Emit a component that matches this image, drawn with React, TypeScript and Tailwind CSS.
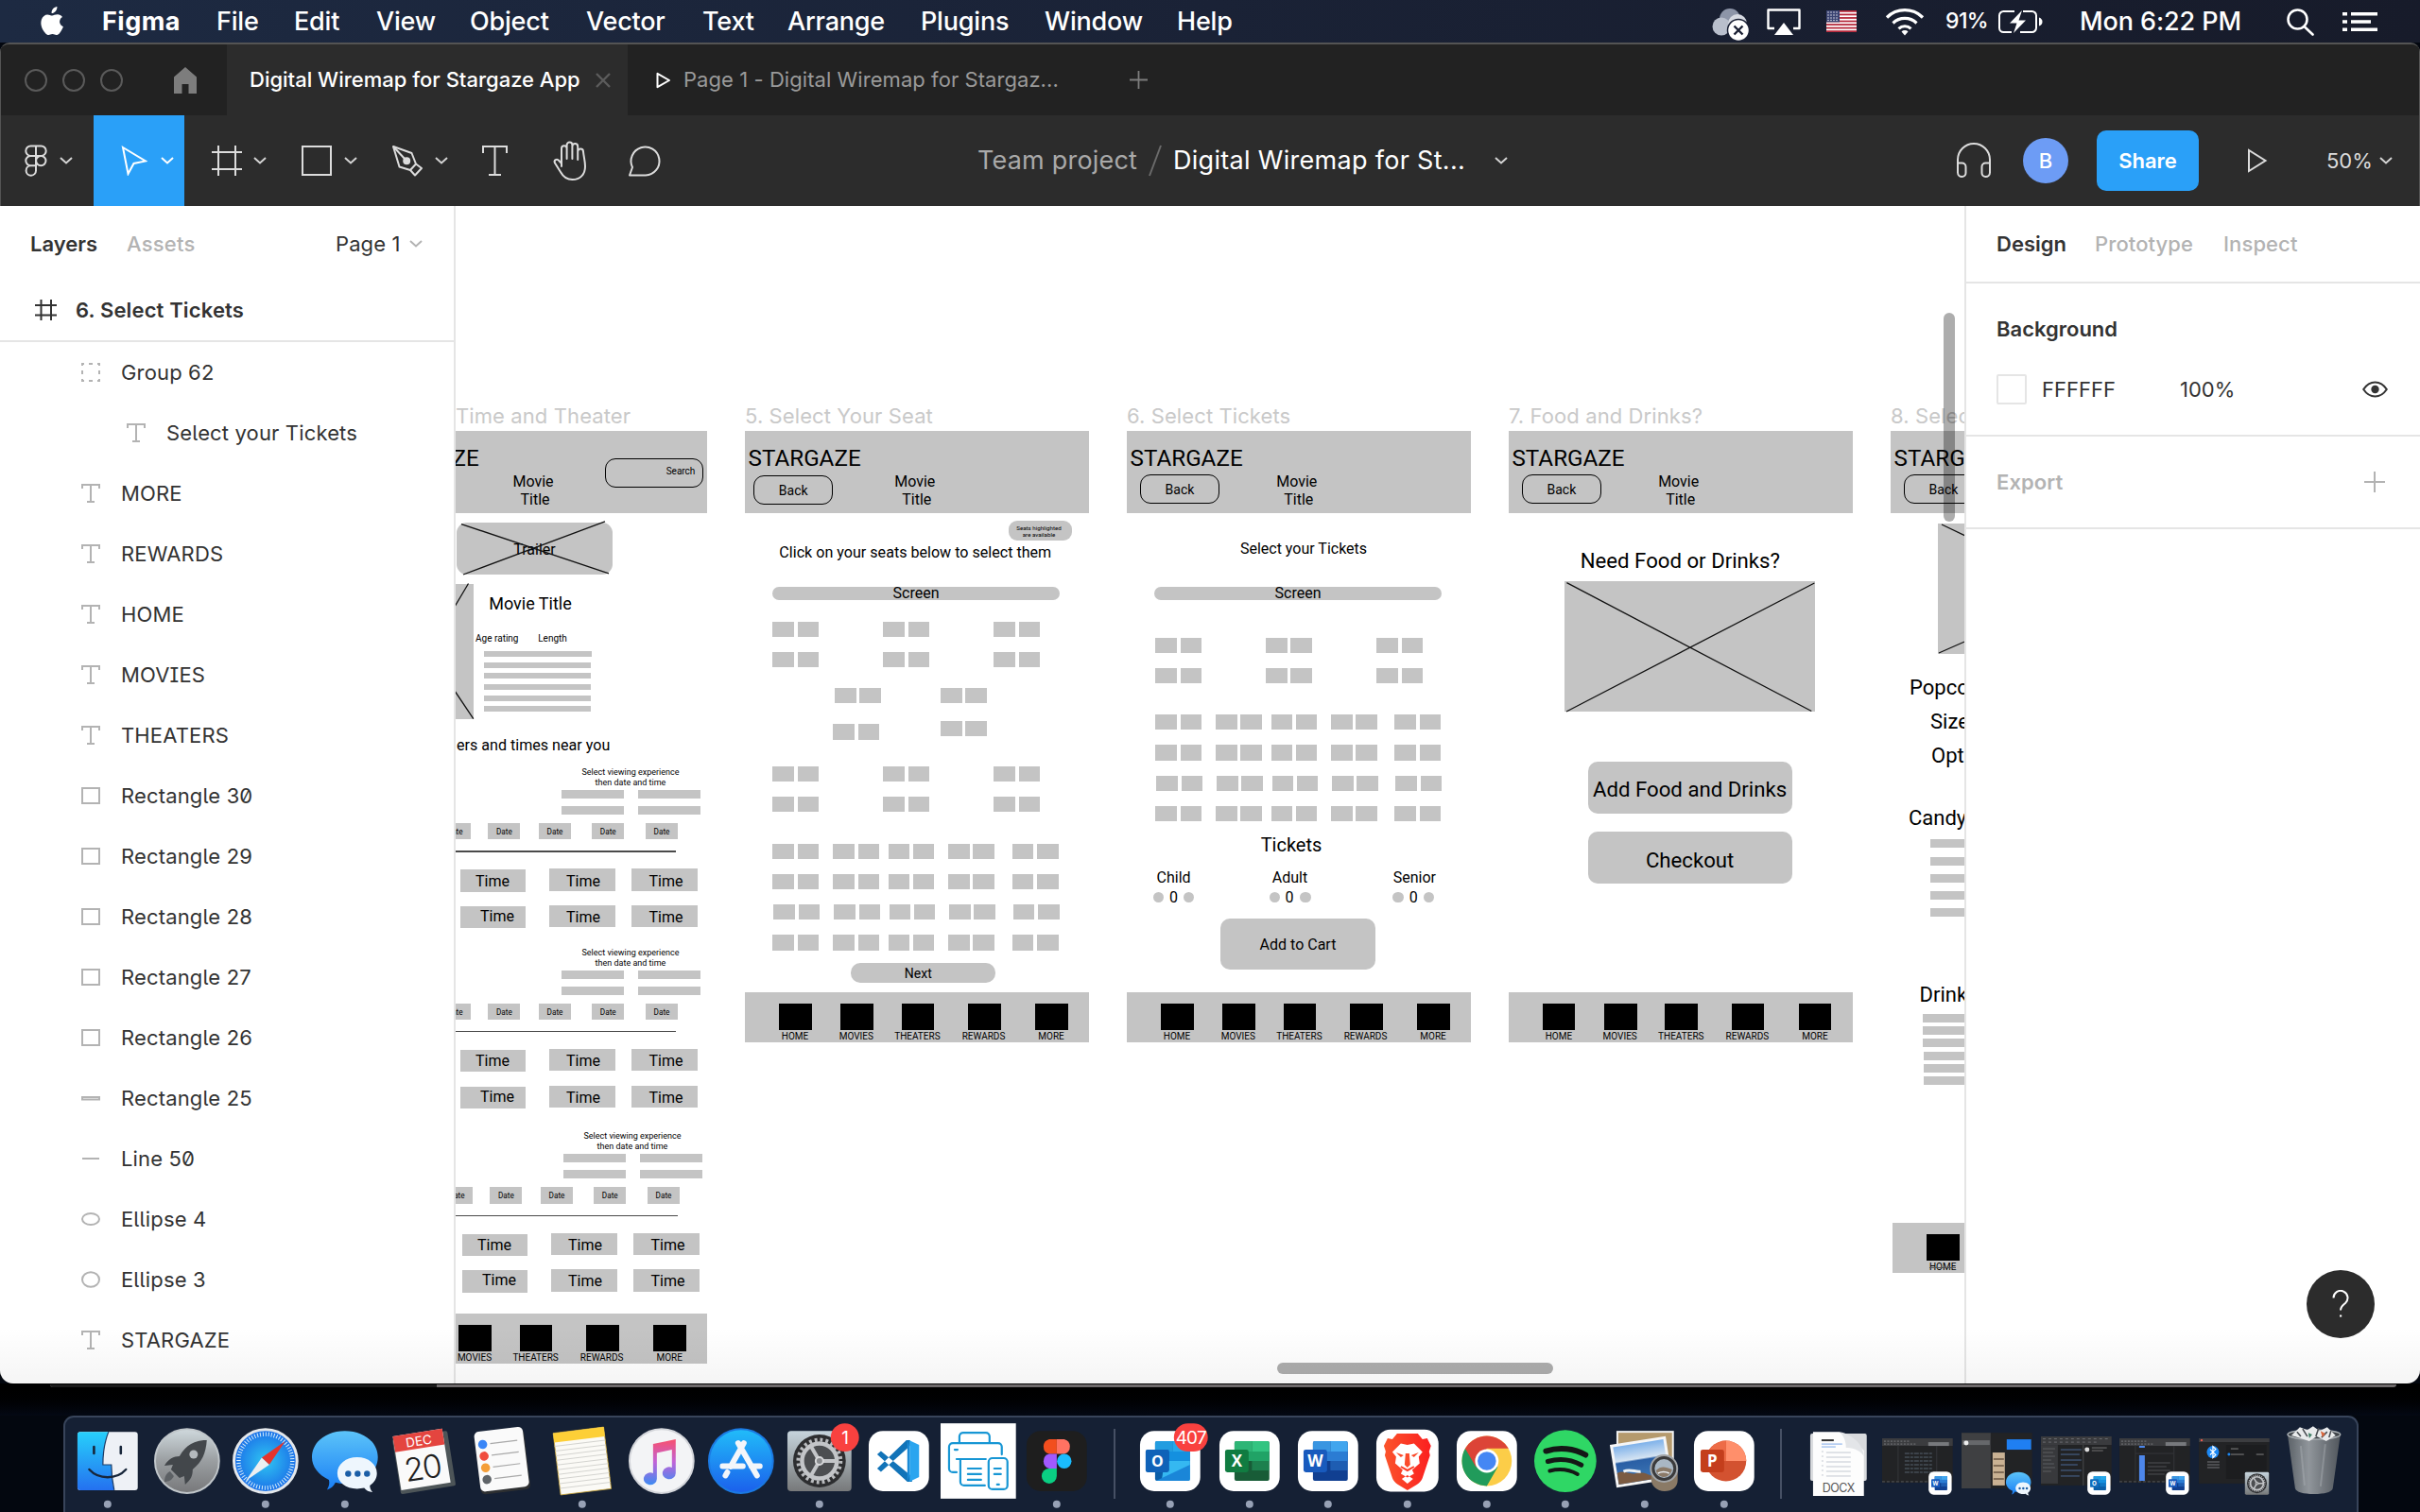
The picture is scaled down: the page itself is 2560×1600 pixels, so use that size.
import React from "react";

/* ------------------------------------------------------------------ */
/* Menu bar                                                            */
/* ------------------------------------------------------------------ */

const MENUS: { label: string; cls: string }[] = [
  { label: "File", cls: "w-[82px]" },
  { label: "Edit", cls: "w-[87px]" },
  { label: "View", cls: "w-[99px]" },
  { label: "Object", cls: "w-[123px]" },
  { label: "Vector", cls: "w-[123px]" },
  { label: "Text", cls: "w-[90px]" },
  { label: "Arrange", cls: "w-[141px]" },
  { label: "Plugins", cls: "w-[131px]" },
  { label: "Window", cls: "w-[140px]" },
  { label: "Help", cls: "w-[70px]" },
];

function MenuBar() {
  return (
    <div className="flex h-[45px] shrink-0 items-center bg-linear-to-r from-[#1d2a42] via-[#1a2236] to-[#171b2a] text-[27px] font-medium text-white">
      <svg className="ml-[41px] h-[34px] w-[28px] shrink-0" viewBox="0 0 28 34" fill="#fff">
        <path d="M19.4 1c.2 2-.6 3.800-1.700 5.100-1.200 1.400-2.700 2.100-4.100 2-.2-2 .6-3.800 1.700-5C16.400 1.900 18 1.100 19.400 1zM20 9.300c1.800 0 3.800 1 5 2.800-4.300 2.600-3.600 8.400.9 10.200-.9 2.500-2.300 4.900-3.800 6.700-1.200 1.400-2.200 2-3.600 2-1.400 0-2.100-.9-4-.9s-2.700.9-4 .9c-1.400 0-2.400-.7-3.600-2.100C2.900 24.700 1.500 19 2.900 14.800 4 11.400 6.600 9.400 9.300 9.400c1.800 0 3.400 1.100 4.900 1.100 1.400 0 3-1.200 5.800-1.200z" />
      </svg>
      <span className="ml-[39px] w-[121px] shrink-0 pt-px font-bold tracking-[0.5px]">Figma</span>
      {MENUS.map((m) => (
        <span key={m.label} className={`${m.cls} shrink-0 whitespace-nowrap pt-px tracking-[-0.2px]`}>
          {m.label}
        </span>
      ))}
      <div className="ml-auto flex items-center">
        <svg className="h-[40px] w-[44px]" viewBox="0 0 44 40">
          <circle cx="21" cy="17" r="11" fill="#8d95a8" />
          <circle cx="12" cy="25" r="9.500" fill="#b9bfcc" />
          <circle cx="29" cy="22" r="10" fill="#d7dae2" />
          <circle cx="30" cy="29" r="11.500" fill="#fff" stroke="#1a2034" strokeWidth="1.500" />
          <path d="M25.500 24.500l9 9M34.500 24.500l-9 9" stroke="#1a2034" strokeWidth="2.400" />
        </svg>
        <svg className="ml-[15px] h-[32px] w-[38px]" viewBox="0 0 38 32">
          <path d="M9 23H2.500V3.500h33V23H29" fill="none" stroke="#fff" strokeWidth="2.400" strokeLinejoin="round" />
          <path d="M19 17l10 13H9z" fill="#fff" />
        </svg>
        <svg className="ml-[26px] h-[23px] w-[32px]" viewBox="0 0 32 23">
          <rect width="32" height="23" fill="#fff" />
          {[0, 2, 4, 6, 8, 10, 12].map((i) => (
            <rect key={i} y={i * 1.77} width="32" height="1.770" fill="#b5283a" />
          ))}
          <rect width="14" height="12.400" fill="#3a4372" />
          {[2, 5, 8, 11].map((x) =>
            [2, 5, 8, 10.500].map((y) => <circle key={`${x}-${y}`} cx={x} cy={y} r=".7" fill="#fff" />),
          )}
        </svg>
        <svg className="ml-[30px] h-[30px] w-[42px]" viewBox="0 0 42 30" fill="none" stroke="#fff" strokeWidth="3.200">
          <path d="M2 10.500a27 27 0 0 1 38 0" />
          <path d="M8.500 16.500a18 18 0 0 1 25 0" />
          <path d="M14.500 22.300a9.500 9.500 0 0 1 13 0" />
          <path d="M21 29.500l-3.500-4a5 5 0 0 1 7 0z" fill="#fff" stroke="none" />
        </svg>
        <span className="ml-[22px] w-[55px] whitespace-nowrap text-[23px] tracking-[-0.6px]">91%</span>
        <svg className="h-[26px] w-[48px]" viewBox="0 0 48 26">
          <path
            d="M18 2H6.500A4.500 4.500 0 0 0 2 6.500v13A4.500 4.500 0 0 0 6.500 24H15M27 2h9.500A4.500 4.500 0 0 1 41 6.500v13a4.500 4.500 0 0 1-4.500 4.500H24"
            fill="none"
            stroke="#fff"
            strokeWidth="2"
          />
          <path d="M44 8.500c2.500 1 3.500 2.500 3.500 4.500S46.500 16.500 44 17.500z" fill="#fff" />
          <path d="M26 1L13 14.500h7.500L17 25l13-13.500h-7.500z" fill="#fff" />
        </svg>
        <span className="ml-[39px] w-[177px] whitespace-nowrap pt-px tracking-[-0.1px]">Mon 6:22 PM</span>
        <svg className="ml-[41px] h-[30px] w-[31px]" viewBox="0 0 31 30" fill="none" stroke="#fff" strokeWidth="2.600">
          <circle cx="12.500" cy="12.500" r="10" />
          <path d="M19.500 20l9 8.500" strokeLinecap="round" />
        </svg>
        <svg className="ml-[29px] mr-[45px] h-[22px] w-[37px]" viewBox="0 0 37 22" fill="#fff">
          <path d="M0 1h5v3.500H0zM9 1h28v3.500H9zM0 9.200h5v3.500H0zM9 9.200h21v3.500H9zM0 17.400h5v3.500H0zM9 17.400h28v3.500H9z" />
        </svg>
      </div>
    </div>
  );
}

/* ------------------------------------------------------------------ */
/* Window chrome                                                       */
/* ------------------------------------------------------------------ */

function TabBar() {
  return (
    <div className="flex h-[75px] shrink-0 items-stretch bg-[#222222] text-[22px]">
      <div className="flex w-[239px] shrink-0 items-center pl-[25px]">
        {[0, 1, 2].map((i) => (
          <span key={i} className="mr-[16px] size-[24px] rounded-full border-2 border-[#5a5a5a]" />
        ))}
        <svg className="ml-[38px] h-[28px] w-[24px]" viewBox="0 0 24 28" fill="#7d7d7d">
          <path d="M12 0l12 10.500V28h-8.500V18h-7v10H0V10.500z" />
        </svg>
      </div>
      <div className="flex w-[424px] shrink-0 items-center bg-[#2c2c2c] pl-[24px]">
        <span className="w-[366px] whitespace-nowrap font-medium text-white">
          Digital Wiremap for Stargaze App
        </span>
        <svg className="size-[16px]" viewBox="0 0 16 16" stroke="#5c5c5c" strokeWidth="2.400">
          <path d="M1 1l14 14M15 1L1 15" />
        </svg>
      </div>
      <div className="flex items-center pl-[30px]">
        <svg className="h-[18px] w-[16px]" viewBox="0 0 16 18" fill="none" stroke="#fff" strokeWidth="2">
          <path d="M1.500 1.800v14.400L14 9z" strokeLinejoin="round" />
        </svg>
        <span className="ml-[13px] w-[472px] whitespace-nowrap tracking-[0.06px] text-[#9a9a9a]">
          Page 1 - Digital Wiremap for Stargaz...
        </span>
        <svg className="size-[19px]" viewBox="0 0 19 19" stroke="#7d7d7d" strokeWidth="1.800">
          <path d="M9.500 0v19M0 9.500h19" />
        </svg>
      </div>
    </div>
  );
}

function Chevron({ className, color = "#d4d4d4" }: { className?: string; color?: string }) {
  return (
    <svg className={`h-[8px] w-[14px] shrink-0 ${className ?? ""}`} viewBox="0 0 14 8" fill="none" stroke={color} strokeWidth="2">
      <path d="M1 1l6 5.500L13 1" />
    </svg>
  );
}

function Toolbar() {
  const s = { fill: "none", stroke: "#dcdcdc", strokeWidth: 2 };
  return (
    <div className="flex h-[96px] shrink-0 items-center bg-[#2c2c2c] text-[26px] text-white">
      <svg className="ml-[25px] h-[34px] w-[24px]" viewBox="0 0 24 34" {...s}>
        <path d="M12 1.500H6.500a5.200 5.200 0 0 0 0 10.400H12zM12 1.500h5.500a5.200 5.200 0 0 1 0 10.400H12M12 11.900H6.500a5.200 5.200 0 0 0 0 10.400H12zM12 22.300H6.500a5.200 5.200 0 1 0 5.500 5.200z" />
        <circle cx="17.300" cy="17.100" r="5.200" />
      </svg>
      <Chevron className="ml-[13px]" />
      <div className="ml-[22px] flex h-[96px] w-[96px] items-center bg-[#2aa0f8]">
        <svg className="ml-[29px] h-[32px] w-[28px]" viewBox="0 0 28 32" fill="none" stroke="#fff" strokeWidth="2">
          <path d="M2 2l24 14.500-12.500 2.500L7.500 30z" strokeLinejoin="miter" />
        </svg>
        <Chevron className="ml-[14px]" color="#fff" />
      </div>
      <svg className="ml-[29px] h-[32px] w-[32px]" viewBox="0 0 32 32" {...s}>
        <path d="M7 0v32M25 0v32M0 7h32M0 25h32" />
      </svg>
      <Chevron className="ml-[12px]" />
      <svg className="ml-[37px] h-[32px] w-[32px]" viewBox="0 0 32 32" {...s}>
        <rect x="1" y="1" width="30" height="30" />
      </svg>
      <Chevron className="ml-[13px]" />
      <svg className="ml-[36px] h-[34px] w-[34px]" viewBox="0 0 34 34" {...s}>
        <path d="M2 2l6.500 21.500 11.500 3.500 6-6.500-4.500-11.500z" strokeLinejoin="round" />
        <path d="M20 27l5 5.500L32 25l-6-4.500M2 2l13 14" strokeLinejoin="round" />
        <circle cx="16.200" cy="17.200" r="3" fill="#dcdcdc" />
      </svg>
      <Chevron className="ml-[12px]" />
      <svg className="ml-[36px] h-[32px] w-[27px]" viewBox="0 0 27 32" {...s}>
        <path d="M1 8V1h25v7M13.500 1v30M7 31h13" />
      </svg>
      <svg className="ml-[47px] h-[42px] w-[38px]" viewBox="0 0 38 42" {...s} strokeLinejoin="round" strokeLinecap="round">
        <path d="M10 27V8a2.800 2.800 0 0 1 5.600 0v11M15.600 19V4.500a2.900 2.900 0 0 1 5.800 0V19M21.400 19V6a2.900 2.900 0 0 1 5.800 0v14M27.200 20V11.500a2.900 2.900 0 0 1 5.800 0c.6 6 2 10 2 15.500 0 9-5.500 14-13.500 14-6 0-9.500-2.500-12.500-8l-6-9.500c-1.500-3 2-5 4.300-2.500L10 24" />
      </svg>
      <svg className="ml-[41px] h-[34px] w-[38px]" viewBox="0 0 38 34" {...s}>
        <path d="M3 32.500L6 24A15 15 0 1 1 20 32.500H3z" strokeLinejoin="round" />
      </svg>
      <span className="ml-[333px] w-[181px] whitespace-nowrap text-[27px] tracking-[0.2px] text-[#a9a9a9]">Team project</span>
      <svg className="h-[34px] w-[14px]" viewBox="0 0 14 34" stroke="#6b6b6b" strokeWidth="2">
        <path d="M13 1L1 33" />
      </svg>
      <span className="ml-[12px] w-[340px] whitespace-nowrap text-[27px] tracking-[0.3px]">Digital Wiremap for St...</span>
      <Chevron />
      <svg className="ml-auto h-[38px] w-[38px]" viewBox="0 0 38 38" {...s}>
        <path d="M2 25V18a17 17 0 0 1 34 0v7" />
        <path d="M2 21.500h4.500a4 4 0 0 1 4 4V32a4 4 0 0 1-4 4A4.500 4.500 0 0 1 2 31.500zM36 21.500h-4.500a4 4 0 0 0-4 4V32a4 4 0 0 0 4 4 4.500 4.500 0 0 0 4.500-4.500z" />
      </svg>
      <span className="ml-[33px] flex size-[48px] items-center justify-center rounded-full bg-[#6d9cf5] text-[22px] font-medium">
        B
      </span>
      <span className="ml-[30px] flex h-[64px] w-[108px] items-center justify-center rounded-[10px] bg-[#2aa0f8] text-[22px] font-semibold">
        Share
      </span>
      <svg className="ml-[51px] h-[26px] w-[22px]" viewBox="0 0 22 26" {...s}>
        <path d="M2 2v22l17.500-11z" />
      </svg>
      <span className="ml-[62px] w-[56px] text-[22px] text-[#dcdcdc]">50%</span>
      <Chevron className="mr-[28px]" />
    </div>
  );
}

/* ------------------------------------------------------------------ */
/* Layers panel                                                        */
/* ------------------------------------------------------------------ */

type Kind = "group" | "text" | "rect" | "bar" | "line" | "flat" | "oval";
const LAYERS: { name: string; kind: Kind; nested?: boolean }[] = [
  { name: "Group 62", kind: "group" },
  { name: "Select your Tickets", kind: "text", nested: true },
  { name: "MORE", kind: "text" },
  { name: "REWARDS", kind: "text" },
  { name: "HOME", kind: "text" },
  { name: "MOVIES", kind: "text" },
  { name: "THEATERS", kind: "text" },
  { name: "Rectangle 30", kind: "rect" },
  { name: "Rectangle 29", kind: "rect" },
  { name: "Rectangle 28", kind: "rect" },
  { name: "Rectangle 27", kind: "rect" },
  { name: "Rectangle 26", kind: "rect" },
  { name: "Rectangle 25", kind: "bar" },
  { name: "Line 50", kind: "line" },
  { name: "Ellipse 4", kind: "flat" },
  { name: "Ellipse 3", kind: "oval" },
  { name: "STARGAZE", kind: "text" },
];

function LayerIcon({ kind }: { kind: Kind }) {
  return (
    <svg className="h-[20px] w-[20px] shrink-0" viewBox="0 0 20 20" fill="none" stroke="#b3b3b3" strokeWidth="2">
      {kind === "group" && <path d="M0 1h3M8 1h4M17 1h3M0 19h3M8 19h4M17 19h3M1 0v3M1 8v4M1 17v3M19 0v3M19 8v4M19 17v3" />}
      {kind === "text" && <path d="M1 5V1h18v4M10 1v18M6 19h8" />}
      {kind === "rect" && <rect x="1" y="2" width="18" height="16" />}
      {kind === "bar" && <rect x="1" y="9" width="18" height="2.500" />}
      {kind === "line" && <path d="M1 10h18" />}
      {kind === "flat" && <ellipse cx="10" cy="10" rx="9" ry="6" />}
      {kind === "oval" && <ellipse cx="10" cy="10" rx="9" ry="7.800" />}
    </svg>
  );
}

function LayersPanel() {
  return (
    <div className="flex w-[482px] shrink-0 flex-col border-r-2 border-[#e5e5e5] bg-white text-[22px] text-[#333]">
      <div className="flex h-[80px] items-center pl-[32px]">
        <span className="w-[102px] font-semibold">Layers</span>
        <span className="w-[221px] font-medium tracking-[0.2px] text-[#b3b3b3]">Assets</span>
        <span className="w-[78px] tracking-[0.1px]">Page 1</span>
        <Chevron color="#b3b3b3" />
      </div>
      <div className="flex h-[64px] items-center border-b-2 border-[#e5e5e5] pb-[2px] pl-[37px]">
        <svg className="h-[22px] w-[23px]" viewBox="0 0 23 22" stroke="#333" strokeWidth="2">
          <path d="M6.500 0v22M17 0v22M0 6h23M0 16.500h23" />
        </svg>
        <span className="ml-[20px] whitespace-nowrap font-semibold tracking-[0.15px]">6. Select Tickets</span>
      </div>
      {LAYERS.map((l) => (
        <div
          key={l.name}
          className={`flex h-[64px] shrink-0 items-center ${l.nested ? "pl-[134px]" : "pl-[86px]"}`}
        >
          <LayerIcon kind={l.kind} />
          <span className="ml-[22px] whitespace-nowrap tracking-[0.15px] [font-feature-settings:'ss02'_1,'zero'_1]">{l.name}</span>
        </div>
      ))}
    </div>
  );
}

/* ------------------------------------------------------------------ */
/* Canvas                                                              */
/* ------------------------------------------------------------------ */

function R({ x, y, w, h, r = 0, c = "#c4c4c4" }: { x: number; y: number; w: number; h: number; r?: number; c?: string }) {
  return <div className="absolute" style={{ left: x, top: y, width: w, height: h, borderRadius: r, background: c }} />;
}

function Outline({ x, y, w, h }: { x: number; y: number; w: number; h: number }) {
  return <div className="absolute rounded-[11px] border-[1.500px] border-black" style={{ left: x, top: y, width: w, height: h }} />;
}

/* Text centred on (x, y), or starting at x when `left` is set. */
function T({ x, y, s, t, left }: { x: number; y: number; s: number; t: string; left?: boolean }) {
  return (
    <div
      className={`absolute -translate-y-1/2 whitespace-nowrap font-['Roboto',sans-serif] leading-none text-black ${left ? "" : "-translate-x-1/2"}`}
      style={{ left: x, top: y, fontSize: s }}
    >
      {t}
    </div>
  );
}

function Label({ x, t }: { x: number; t: string }) {
  return (
    <div className="absolute top-[426px] whitespace-nowrap text-[22px] leading-[28px] tracking-[0.1px] text-[#c9c9c9]" style={{ left: x }}>
      {t}
    </div>
  );
}

function Lines({ d }: { d: string }) {
  return (
    <svg className="absolute left-0 top-0 h-[1600px] w-[2560px]" viewBox="0 0 2560 1600" fill="none" stroke="#111" strokeWidth="1.300">
      <path d={d} />
    </svg>
  );
}

function Header({ x, back }: { x: number; back?: number }) {
  return (
    <>
      <R x={x} y={456.4} w={364} h={86.6} />
      <T x={x + 3.800} y={485} s={24.2} t="STARGAZE" left />
      {back !== undefined && (
        <>
          <Outline x={x + back} y={back < 12 ? 502.500 : 501.500} w={84} h={31} />
          <T x={x + back + 42} y={back < 12 ? 518.500 : 517.500} s={14} t="Back" />
        </>
      )}
      <T x={x + 180} y={510} s={16} t="Movie" />
      <T x={x + 182} y={529} s={16} t="Title" />
    </>
  );
}

const NAV = [
  { t: "HOME", x: 36.2, c: 53.2 },
  { t: "MOVIES", x: 101.4, c: 118 },
  { t: "THEATERS", x: 165.7, c: 182.6 },
  { t: "REWARDS", x: 236.2, c: 252.7 },
  { t: "MORE", x: 307.2, c: 324.2 },
];

function Footer({ x, y }: { x: number; y: number }) {
  return (
    <>
      <R x={x} y={y} w={364} h={52.500} />
      {NAV.map((n) => (
        <React.Fragment key={n.t}>
          <R x={x + n.x} y={y + 12} w={34.500} h={28.200} c="#000" />
          <T x={x + n.c} y={y + 47} s={10} t={n.t} />
        </React.Fragment>
      ))}
    </>
  );
}

function Seats({ at }: { at: [number, number][] }) {
  return (
    <>
      {at.map(([x, y]) => (
        <React.Fragment key={`${x}-${y}`}>
          <R x={x} y={y} w={22.500} h={16.300} />
          <R x={x + 26.300} y={y} w={22.500} h={16.300} />
        </React.Fragment>
      ))}
    </>
  );
}

const grid = (xs: number[], ys: number[], dx = 0): [number, number][] =>
  ys.flatMap((y) => xs.map((x): [number, number] => [x + dx, y]));

function Showtimes({ dx, dy }: { dx: number; dy: number }) {
  return (
    <>
      <T x={667 + dx} y={817 + dy} s={9} t="Select viewing experience" />
      <T x={667 + dx} y={828 + dy} s={9} t="then date and time" />
      {[594, 675].map((x) => [836, 853].map((y) => <R key={`${x}${y}`} x={x + dx} y={y + dy} w={66} h={9} />))}
      {[464.2, 516.4, 570, 626.3, 683].map((x) => (
        <React.Fragment key={x}>
          <R x={x + dx} y={871 + dy} w={33.600} h={17.300} />
          <T x={x + 17 + dx} y={880 + dy} s={8.2} t="Date" />
        </React.Fragment>
      ))}
      <R x={440} y={900.2 + dy} w={274.6 + dx} h={1.600} c="#4a4a4a" />
      <R x={486.5 + dx} y={920.4 + dy} w={69.700} h={23.400} />
      <R x={486.5 + dx} y={959 + dy} w={69.700} h={23.400} />
      <T x={521 + dx} y={932.500 + dy} s={16} t="Time" />
      <T x={526 + dx} y={970 + dy} s={16} t="Time" />
      {[
        [581.2, 617],
        [668.2, 704.5],
      ].map(([x, c]) => (
        <React.Fragment key={x}>
          <R x={x + dx} y={919.300 + dy} w={69.700} h={23.600} />
          <R x={x + dx} y={957.900 + dy} w={69.700} h={23.600} />
          <T x={c + dx} y={932.500 + dy} s={16} t="Time" />
          <T x={c + dx} y={971 + dy} s={16} t="Time" />
        </React.Fragment>
      ))}
    </>
  );
}

function TheaterFrame() {
  return (
    <>
      <Label x={482} t="Time and Theater" />
      <Header x={384} />
      <Outline x={639.5} y={484.5} w={104.5} h={31.5} />
      <T x={720} y={499} s={10} t="Search" />
      <R x={483.4} y={553.2} w={164.6} h={54.400} r={11} />
      <T x={565.5} y={581.500} s={16} t="Trailer" />
      <R x={440} y={618} w={60.8} h={142.800} />
      <Lines d="M488 554.600L644 606.800M490 608L640 551.800M478 647L495.500 617.500M478 726.500L500.800 760.700" />
      <T x={561} y={638.500} s={18} t="Movie Title" />
      <T x={525.8} y={675.500} s={10} t="Age rating" />
      <T x={584.5} y={675.500} s={10} t="Length" />
      <R x={512.4} y={689} w={113.400} h={6} />
      {[700.7, 712.1, 723.9, 735.7, 747.1].map((y) => (
        <R key={y} x={511.5} y={y} w={113.400} h={6} />
      ))}
      <T x={483} y={788.500} s={16.1} t="ers and times near you" left />
      <Showtimes dx={0} dy={0} />
      <Showtimes dx={0} dy={190.6} />
      <Showtimes dx={2} dy={385.4} />
      <Footer x={384} y={1390} />
    </>
  );
}

function SeatFrame() {
  return (
    <>
      <Label x={788} t="5. Select Your Seat" />
      <Header x={787.8} back={9.4} />
      <R x={1067} y={551} w={66.5} h={20.800} r={9} />
      <T x={1099} y={558.500} s={6.200} t="Seats highlighted" />
      <T x={1099} y={565.500} s={6.200} t="are available" />
      <T x={968.3} y={585} s={16.1} t="Click on your seats below to select them" />
      <R x={817.3} y={621} w={304} h={14} r={7} />
      <T x={969} y={628} s={16} t="Screen" />
      <Seats at={grid([817.3, 934.3, 1051.3], [657.5, 689.6, 810.7, 842.9])} />
      <Seats at={[[883, 727.9], [995, 727.9], [881.2, 766.4], [995, 763.2]]} />
      <Seats at={grid([817.3, 881.2, 939.6, 1003, 1070.9], [892.5, 924.6, 989.3])} />
      <Seats at={grid([817.3, 881.2, 939.6, 1003, 1070.9], [957.1], 1)} />
      <R x={900} y={1019.300} w={153} h={20.400} r={10} />
      <T x={971.3} y={1030} s={14} t="Next" />
      <Footer x={787.8} y={1050} />
    </>
  );
}

function TicketFrame() {
  return (
    <>
      <Label x={1192} t="6. Select Tickets" />
      <Header x={1191.8} back={14.2} />
      <T x={1379} y={580.500} s={16} t="Select your Tickets" />
      <R x={1221.3} y={621} w={304} h={14} r={7} />
      <T x={1373} y={628} s={16} t="Screen" />
      <Seats at={grid([1222.2, 1339, 1456.4], [674.7, 706.7])} />
      <Seats at={grid([1222.2, 1286, 1344.6, 1408, 1475.4], [755.8, 788.4, 853])} />
      <Seats at={grid([1222.2, 1286, 1344.6, 1408, 1475.4], [820.8], 1)} />
      <T x={1366} y={894} s={20} t="Tickets" />
      {[
        { t: "Child", c: 1241.6, a: 1225.4, z: 1257.8, n: 1241.6 },
        { t: "Adult", c: 1364.5, a: 1348.8, z: 1380.9, n: 1364 },
        { t: "Senior", c: 1496.3, a: 1479.1, z: 1511.5, n: 1495.3 },
      ].map((k) => (
        <React.Fragment key={k.t}>
          <T x={k.c} y={929} s={16} t={k.t} />
          <R x={k.a - 5.7} y={943.800} w={11.400} h={11.400} r={6} />
          <R x={k.z - 5.7} y={943.800} w={11.400} h={11.400} r={6} />
          <T x={k.n} y={949.500} s={16} t="0" />
        </React.Fragment>
      ))}
      <R x={1290.8} y={971.5} w={164.7} h={54.300} r={10} />
      <T x={1373} y={999.500} s={16} t="Add to Cart" />
      <Footer x={1191.8} y={1050} />
    </>
  );
}

function FoodFrame() {
  return (
    <>
      <Label x={1596} t="7. Food and Drinks?" />
      <Header x={1595.7} back={14.2} />
      <T x={1777.4} y={592.500} s={22.2} t="Need Food or Drinks?" />
      <R x={1655.3} y={615.2} w={265.2} h={137.800} />
      <Lines d="M1657.400 616.600L1916.300 752.500M1919.400 617L1657 753" />
      <R x={1679.6} y={806} w={216} h={55} r={10} />
      <T x={1787.6} y={834.500} s={22.2} t="Add Food and Drinks" />
      <R x={1679.6} y={880.4} w={216} h={55} r={10} />
      <T x={1787.6} y={909.500} s={22.2} t="Checkout" />
      <Footer x={1595.7} y={1050} />
    </>
  );
}

function SnackFrame() {
  return (
    <>
      <Label x={2000} t="8. Select Food" />
      <Header x={1999.8} back={14.2} />
      <R x={2050} y={553.6} w={200} h={138} />
      <Lines d="M2054 555L2100 577M2051 691L2100 669.500" />
      <T x={2020} y={728} s={22} t="Popcorn" left />
      <T x={2042} y={764} s={22} t="Size" left />
      <T x={2043} y={800} s={22} t="Options" left />
      <T x={2019} y={865.500} s={22} t="Candy" left />
      {[887.5, 906.8, 924.8, 942.9, 961].map((y) => (
        <R key={y} x={2041.5} y={y} w={80} h={9} />
      ))}
      <T x={2030.5} y={1052.500} s={22} t="Drinks" left />
      {[1073.4, 1086.2, 1099.4].map((y) => (
        <R key={y} x={2033.5} y={y} w={80} h={9} />
      ))}
      {[1112.6, 1125.7, 1138.9].map((y) => (
        <R key={y} x={2034.6} y={y} w={80} h={9} />
      ))}
      <Footer x={2002} y={1294} />
      <R x={2041} y={1341} w={28} h={1} c="#555" />
    </>
  );
}

function Canvas() {
  return (
    <div className="relative min-w-0 flex-1 overflow-hidden bg-white">
      <div className="absolute left-[-482px] top-[-218px] h-[1600px] w-[2560px]">
        <TheaterFrame />
        <SeatFrame />
        <TicketFrame />
        <FoodFrame />
        <SnackFrame />
        <div className="absolute left-[2056px] top-[331px] h-[221px] w-[12px] rounded-full bg-black/32" />
        <div className="absolute left-[1351px] top-[1442px] h-[12px] w-[292px] rounded-full bg-black/32" />
      </div>
    </div>
  );
}

/* ------------------------------------------------------------------ */
/* Design panel                                                        */
/* ------------------------------------------------------------------ */

function DesignPanel() {
  return (
    <div className="flex w-[482px] shrink-0 flex-col border-l-2 border-[#e5e5e5] bg-white text-[22px] text-[#333]">
      <div className="flex h-[82px] items-center border-b-2 border-[#e5e5e5] pl-[32px]">
        <span className="w-[104px] font-semibold">Design</span>
        <span className="w-[136px] font-medium tracking-[0.1px] text-[#b3b3b3]">Prototype</span>
        <span className="font-medium tracking-[0.1px] text-[#b3b3b3]">Inspect</span>
      </div>
      <div className="flex h-[162px] flex-col border-b-2 border-[#e5e5e5] pl-[32px]">
        <div className="flex h-[96px] items-center font-semibold">Background</div>
        <div className="flex h-[32px] items-center">
          <span className="size-[32px] rounded-[2px] border-2 border-[#e5e5e5]" />
          <span className="ml-[16px] w-[146px]">FFFFFF</span>
          <span>100%</span>
          <svg className="ml-auto mr-[34px] h-[18px] w-[27px]" viewBox="0 0 27 18" fill="none" stroke="#333" strokeWidth="2">
            <path d="M1.200 9C4.500 4 8.500 1.500 13.500 1.500S22.500 4 25.800 9c-3.300 5-7.300 7.500-12.300 7.500S4.500 14 1.200 9z" />
            <circle cx="13.500" cy="9" r="4.200" fill="#333" stroke="none" />
          </svg>
        </div>
      </div>
      <div className="flex h-[98px] items-center border-b-2 border-[#e5e5e5] pl-[32px] pr-[37px]">
        <span className="font-semibold tracking-[0.1px] text-[#b3b3b3]">Export</span>
        <svg className="ml-auto size-[22px]" viewBox="0 0 22 22" stroke="#b3b3b3" strokeWidth="2">
          <path d="M11 0v22M0 11h22" />
        </svg>
      </div>
    </div>
  );
}

/* ------------------------------------------------------------------ */
/* Dock. Every icon is drawn in an 84 x 100 cell.                      */
/* ------------------------------------------------------------------ */

function Cell({ children, dot }: { children: React.ReactNode; dot?: boolean }) {
  return (
    <svg className="h-[100px] w-[83.700px] shrink-0 overflow-visible" viewBox="0 0 84 100">
      {children}
      {dot && <circle cx="42" cy="92" r="4" fill="#97a1b5" />}
    </svg>
  );
}

function Tile({ fill = "#fff" }: { fill?: string }) {
  return <rect x="10" y="14" width="64" height="64" rx="15" fill={fill} />;
}

function Badge({ x, t }: { x: number; t: string }) {
  return (
    <>
      <rect x={x - (t.length > 1 ? 18 : 15)} y="6" width={t.length > 1 ? 36 : 30} height="30" rx="15" fill="#f9413f" />
      <text x={x} y="28" textAnchor="middle" fontSize="19" fill="#fff" fontFamily="Inter" letterSpacing="-0.8">
        {t}
      </text>
    </>
  );
}

function OfficeMark({ letter, light, mid, dark, box }: { letter: string; light: string; mid: string; dark: string; box: string }) {
  return (
    <>
      <rect x="26" y="25" width="37" height="42" rx="2" fill={dark} />
      <path d="M28 25h16.500v11H26v-9a2 2 0 0 1 2-2z" fill={light} opacity=".85" />
      <path d="M44.500 25H61a2 2 0 0 1 2 2v9H44.500z" fill={light} />
      <path d="M26 36h37v10H26z" fill={mid} />
      <path d="M26 46h18.500v10H26z" fill={dark} />
      <path d="M44.500 46H63v10H44.500z" fill={mid} opacity=".5" />
      <rect x="16" y="34" width="25" height="24" rx="2.500" fill={box} />
      <text x="28.500" y="52" textAnchor="middle" fontSize="17" fontWeight="700" fill="#fff" fontFamily="Open Sans">
        {letter}
      </text>
    </>
  );
}

const WORD = { letter: "W", light: "#41a5ee", mid: "#2b7cd3", dark: "#103f91", box: "#185abd" };
const OUTLOOK = { letter: "O", light: "#28a8ea", mid: "#1490df", dark: "#0a5ea8", box: "#0f6cbd" };

function Gear() {
  return (
    <>
      <rect x="8" y="14" width="68" height="64" rx="4" fill="url(#steel)" />
      <circle cx="42" cy="46" r="28" fill="#2d2e30" />
      <circle cx="42" cy="46" r="22.500" fill="none" stroke="#b9bbbe" strokeWidth="4" strokeDasharray="2.900 2.990" />
      <circle cx="42" cy="46" r="18.500" fill="#4c4e51" stroke="#c3c5c8" strokeWidth="4.500" />
      <path d="M42 46h18M42 46l-9-15.600M42 46l-9 15.600" stroke="#c3c5c8" strokeWidth="4" />
      <circle cx="42" cy="46" r="4" fill="#8a8c8f" stroke="#d8d9db" strokeWidth="2" />
    </>
  );
}

function Bubbles() {
  return (
    <>
      <path d="M42 14c20 0 35 12 35 28S62 70 42 70c-4 0-7-.3-10-1.200-2 4-5 6.700-9 7.700 2-3 3-7 2-10.500C14 61 7 52 7 42c0-16 15-28 35-28z" fill="url(#msg)" />
      <path d="M55 42c12 0 21 7.500 21 17 0 5.500-3 10-7.500 13 0 3 1 5 3 7-4 0-7-1.500-9-4.300-2.500.6-5 .8-7.500.8-12 0-21-7-21-16.500S43 42 55 42z" fill="#eef6fd" />
      <g fill="#1b5ea6">
        <circle cx="45.500" cy="59.500" r="3.200" />
        <circle cx="55.500" cy="59.500" r="3.200" />
        <circle cx="65.500" cy="59.500" r="3.200" />
      </g>
    </>
  );
}

function DockThumb({ children, y, h, badge }: { children?: React.ReactNode; y: number; h: number; badge: React.ReactNode }) {
  return (
    <Cell>
      <rect x="4" y={y} width="75" height={h} fill="#222325" />
      {children}
      {badge}
    </Cell>
  );
}

function MiniTile({ mark }: { mark: React.ReactNode }) {
  return (
    <g transform="translate(50.500 53) scale(.36)">
      <rect x="8" y="12" width="68" height="68" rx="15" fill="#fff" />
      {mark}
    </g>
  );
}

function WordToolbar() {
  return (
    <>
      <path d="M4 22h75v8H4z" fill="#3b3c3f" />
      <path d="M6 25h28M6 28h34" stroke="#77797d" strokeWidth="1" strokeDasharray="2 1.500" />
      <path d="M53 26h22v4H53z" fill="#77797d" />
      <path d="M4 68h75" stroke="#55575b" strokeDasharray="3 2" />
    </>
  );
}

function Dock() {
  return (
    <div className="ml-[67px] flex h-[102px] w-[2428px] shrink-0 items-start rounded-t-[11px] border-2 border-b-0 border-[#38445a] bg-[#152034] pl-[3px]">
      <svg className="absolute size-0" viewBox="0 0 1 1">
        <defs>
          <linearGradient id="finder" x2="0" y2="1"><stop stopColor="#27d0fb" /><stop offset="1" stopColor="#2471f0" /></linearGradient>
          <linearGradient id="silver" x2="0" y2="1"><stop stopColor="#cfd9dd" /><stop offset=".5" stopColor="#9a9ea1" /><stop offset="1" stopColor="#77787a" /></linearGradient>
          <linearGradient id="steel" x2="0" y2="1"><stop stopColor="#c6d4dc" /><stop offset="1" stopColor="#77797a" /></linearGradient>
          <radialGradient id="safari"><stop stopColor="#2fc6f2" /><stop offset="1" stopColor="#1b6fe8" /></radialGradient>
          <linearGradient id="msg" x2="0" y2="1"><stop stopColor="#5cc4f9" /><stop offset="1" stopColor="#1a7ff5" /></linearGradient>
          <linearGradient id="store" x2="0" y2="1"><stop stopColor="#21bdf9" /><stop offset="1" stopColor="#1b5fec" /></linearGradient>
          <linearGradient id="note" x2="0" y2="1"><stop stopColor="#f8506e" /><stop offset=".5" stopColor="#c063d8" /><stop offset="1" stopColor="#3d8bf2" /></linearGradient>
          <linearGradient id="brave" x2="1"><stop stopColor="#fb542b" /><stop offset="1" stopColor="#fb1f20" /></linearGradient>
          <linearGradient id="sea" x2="0" y2="1"><stop stopColor="#7fb2ea" /><stop offset=".4" stopColor="#d4e3f2" /><stop offset=".45" stopColor="#2a5fa5" /><stop offset="1" stopColor="#3f78b6" /></linearGradient>
          <linearGradient id="bin" x2="1"><stop stopColor="#62686d" /><stop offset=".4" stopColor="#9ba0a4" /><stop offset="1" stopColor="#565b60" /></linearGradient>
        </defs>
      </svg>
      {/* Finder */}
      <Cell dot>
        <rect x="10" y="15" width="64" height="62" rx="3" fill="#eef1f6" />
        <path d="M13 15h30c-4 10-6 20-6 35h9c0 9 1 18 3 27H13a3 3 0 0 1-3-3V18a3 3 0 0 1 3-3z" fill="url(#finder)" />
        <path d="M43 15c-4 10-6 20-6 35h9c0 9 1 18 3 27" fill="none" stroke="#1d3d66" strokeWidth="1.200" />
        <path d="M27.500 31v7M56 31v7" stroke="#17263a" strokeWidth="2.600" strokeLinecap="round" />
        <path d="M22.500 55c10 11 29 11 39 0" fill="none" stroke="#17263a" strokeWidth="2.400" strokeLinecap="round" />
      </Cell>
      {/* Launchpad */}
      <Cell>
        <circle cx="42" cy="46" r="34" fill="url(#silver)" stroke="#c0c6ca" strokeWidth="2" />
        <path d="M63 24c-13 0-22 5-29 17-6 0-12 3-16 10l9-1-2 5 9 9 5-2 1 9c6-5 8-9 8-16 10-8 14-17 15-31z" fill="#43474b" />
        <circle cx="49" cy="39" r="4.500" fill="#b4b9bd" />
        <path d="M24 57c-4 2-6 6-6 11 5 0 8-2 10-6z" fill="#5d6165" />
      </Cell>
      {/* Safari */}
      <Cell dot>
        <circle cx="42" cy="46" r="33.500" fill="url(#safari)" stroke="#e4e7ea" strokeWidth="3" />
        <circle cx="42" cy="46" r="28.500" fill="none" stroke="#d5ecfb" strokeWidth="4.500" strokeDasharray="1 1.980" />
        <path d="M63 25L46 50l-8-7.500z" fill="#e4342d" />
        <path d="M21 67l17-24.500 8 7.500z" fill="#eceff1" />
      </Cell>
      <Cell dot><Bubbles /></Cell>
      {/* Calendar */}
      <Cell>
        <g transform="rotate(-9 42 46)">
          <rect x="12" y="18" width="59" height="59" rx="2" fill="#4d5558" />
          <rect x="13" y="15" width="53" height="58" fill="#fafafa" />
          <path d="M13 15h53v17H13z" fill="#e4453f" />
          <text x="39.500" y="29" textAnchor="middle" fontSize="13.500" fill="#fff" fontFamily="Inter">DEC</text>
          <text x="39" y="65" textAnchor="middle" fontSize="34" fill="#1f1f1f" fontFamily="Inter" fontWeight="300" letterSpacing="-1.500">20</text>
        </g>
      </Cell>
      {/* Reminders */}
      <Cell>
        <g transform="rotate(-7 42 46)">
          <rect x="15" y="15" width="53" height="64" rx="5" fill="#2d2f31" />
          <rect x="15" y="12" width="52" height="64" rx="5" fill="#fafafa" />
          {["#3a86f7", "#f04d3e", "#f49e38", "#5f6468"].map((c, i) => (
            <g key={c}>
              <circle cx="23" cy={26 + i * 12.500} r="4.800" fill={c} />
              <path d={`M31 ${26 + i * 12.500}h29`} stroke="#a9a9a9" strokeWidth="1.200" />
            </g>
          ))}
        </g>
      </Cell>
      {/* Notes */}
      <Cell dot>
        <g transform="rotate(-7 42 46)">
          <rect x="15" y="13" width="54" height="66" fill="#fbfaf6" stroke="#c9a437" strokeWidth=".8" />
          <path d="M15 13h54v10H15z" fill="#fdcf37" />
          {[0, 1, 2, 3, 4, 5, 6, 7, 8, 9].map((i) => (
            <path key={i} d={`M15 ${27 + i * 5}h54`} stroke="#d4d4d0" strokeWidth="1" />
          ))}
        </g>
      </Cell>
      {/* Music */}
      <Cell>
        <circle cx="42" cy="46" r="34" fill="#f3f4f6" stroke="#d3d5da" strokeWidth="2" />
        <path d="M33 28l24-5v36a7 6.500 0 1 1-4-6V34l-16 3.500V65a7 6.500 0 1 1-4-6z" fill="url(#note)" />
      </Cell>
      {/* App Store */}
      <Cell>
        <circle cx="42" cy="46" r="34" fill="url(#store)" stroke="#1b79e2" strokeWidth="2" />
        <g stroke="#f3f6fa" strokeWidth="6" strokeLinecap="round">
          <path d="M45 27L31 52M27.500 58l-2 3.500M39 27l20 34.500M22.500 51.500H44M53 51.500h9" />
        </g>
      </Cell>
      <Cell dot><Gear /><Badge x={69} t="1" /></Cell>
      {/* VS Code */}
      <Cell>
        <Tile />
        <path d="M19 39l4-3.500 33 27V68l-5 0zM19 54l4 3.500L54 30v-6h-4z" fill="#1173b8" />
        <path d="M52 23.500l11.500 5.500v34L52 68.500c1.500 0 1.500-1.500 1.500-3v-39c0-1.500 0-3-1.500-3z" fill="#2aa5ef" />
        <path d="M51 24l2.500 7v30L51 68z" fill="#1a8ad6" />
      </Cell>
      {/* Printer utility */}
      <Cell>
        <rect x="2" y="6" width="80" height="80" fill="#fff" />
        <g fill="none" stroke="#1796d4" strokeWidth="2.200" strokeLinecap="round" strokeLinejoin="round">
          <path d="M22 26v-6a4 4 0 0 1 4-4h24a4 4 0 0 1 4 4v6M19 58h-4a4 4 0 0 1-4-4V31a4 4 0 0 1 4-4h48a4 4 0 0 1 4 4v8M17 34h3M19 44h31M23 44v24a4 4 0 0 0 4 4h22M31 54h14M31 60h14M31 66h14" />
          <rect x="53" y="43" width="20" height="33" rx="4" />
          <path d="M59 54h7M59 60h7M62 71h2" />
        </g>
      </Cell>
      {/* Figma */}
      <Cell dot>
        <Tile fill="#1e1e1e" />
        <path d="M42 23h-8a8 8 0 0 0 0 15.500h8z" fill="#f24e1e" />
        <path d="M42 23h8a8 8 0 0 1 0 15.500h-8z" fill="#ff7262" />
        <path d="M42 38.500h-8a8 8 0 0 0 0 15.500h8z" fill="#a259ff" />
        <circle cx="50" cy="46.200" r="7.700" fill="#1abcfe" />
        <path d="M42 54h-8a8 8 0 1 0 8 8z" fill="#0acf83" />
      </Cell>
      <div className="ml-[18px] mr-[16px] mt-[12px] h-[74px] w-[2px] shrink-0 bg-[#465064]" />
      {/* Outlook */}
      <Cell dot>
        <Tile />
        <OfficeMark {...OUTLOOK} />
        <path d="M36 46l27 0v19a2 2 0 0 1-2 2H33z" fill="#35b8f1" />
        <path d="M27 67l36-17v15a2 2 0 0 1-2 2z" fill="#1a86d8" />
        <rect x="16" y="34" width="25" height="24" rx="2.500" fill="#0f62b8" />
        <text x="28.500" y="52" textAnchor="middle" fontSize="16" fontWeight="700" fill="#fff" fontFamily="Open Sans">O</text>
        <Badge x={64} t="407" />
      </Cell>
      <Cell dot>
        <Tile />
        <OfficeMark letter="X" light="#33c481" mid="#21a366" dark="#185c37" box="#107c41" />
      </Cell>
      <Cell dot><Tile /><OfficeMark {...WORD} /></Cell>
      {/* Brave */}
      <Cell dot>
        <rect x="9" y="12.500" width="66" height="66" rx="15" fill="#fff" />
        <path d="M31 17h22l5 6 5-1 4 8-2 6 1 4-8 24c-1 3-3 5-6 7l-10 6-10-6c-3-2-5-4-6-7l-8-24 1-4-2-6 4-8 5 1z" fill="url(#brave)" />
        <path d="M42 29l-7-1.500-9 9 4 5-1 7 8 7-2 4 7 4 7-4-2-4 8-7-1-7 4-5-9-9zM36 65l6-4 6 4-6 5z" fill="#fff" />
        <path d="M30 37l8 3-3 2zM54 37l-8 3 3 2zM40 38h4l1 12-3 3-3-3z" fill="#fb4a2a" />
        <path d="M35 52l7 4 7-4" fill="none" stroke="#fb3a25" strokeWidth="2" />
      </Cell>
      {/* Chrome */}
      <Cell dot>
        <Tile />
        <circle cx="42" cy="46" r="26.500" fill="#fccd48" />
        <path d="M42 46L19.100 32.700A26.500 26.500 0 0 0 42 72.500l11.500-20z" fill="#219b5b" />
        <path d="M65 32.800H42L30.500 52.600 19 32.800A26.500 26.500 0 0 1 65 32.800z" fill="#dc4437" />
        <circle cx="42" cy="46" r="12.500" fill="#fff" />
        <circle cx="42" cy="46" r="9.800" fill="#4587f4" />
      </Cell>
      {/* Spotify */}
      <Cell dot>
        <circle cx="42" cy="46" r="33" fill="#2fd765" />
        <g fill="none" stroke="#141816" strokeLinecap="round">
          <path d="M21.500 35.500c14-4.500 30-3 42 4" strokeWidth="6" />
          <path d="M23.500 46.500c12-3.500 25-2 35.500 3.800" strokeWidth="5" />
          <path d="M25.500 56.500c10-2.500 20.500-1.500 29.500 3.500" strokeWidth="4" />
        </g>
      </Cell>
      {/* Preview */}
      <Cell dot>
        <rect x="13" y="15" width="59" height="42" fill="#b59a6d" stroke="#f2f2f2" strokeWidth="2" />
        <g transform="rotate(-9 38 46)">
          <rect x="8" y="24" width="60" height="46" fill="#f6f6f6" />
          <rect x="11" y="27" width="54" height="40" fill="url(#sea)" />
          <path d="M11 55c8-3 12 4 20 3s14 5 22 9H11z" fill="#7b5b42" />
          <path d="M18 54c8-2 12 3 18 3" stroke="#eaf1f6" strokeWidth="3" fill="none" />
        </g>
        <path d="M49 54h28v12c0 8-6 12-14 12s-14-6-14-12z" fill="#8a7a66" />
        <circle cx="62.500" cy="54" r="14" fill="#3b3b3c" stroke="#a2a5a8" strokeWidth="2" />
        <circle cx="62.500" cy="54" r="10" fill="#a9b7c4" />
        <path d="M54 56c5-5 10-4 17-1-1 5-5 8-8.500 8S55 61 54 56z" fill="#8b7a68" />
        <path d="M56 59c4-2 8-2 12 0" stroke="#e8edf1" strokeWidth="1.600" fill="none" />
      </Cell>
      {/* PowerPoint */}
      <Cell dot>
        <Tile />
        <circle cx="44" cy="46" r="21.500" fill="#d35230" />
        <path d="M44 24.500A21.500 21.500 0 0 1 65.500 46H44z" fill="#ff8f6b" />
        <path d="M44 24.500V46H22.500A21.500 21.500 0 0 1 44 24.500z" fill="#ed6c47" />
        <rect x="17" y="34" width="25" height="24" rx="2.500" fill="#c43e1c" />
        <text x="29.500" y="52" textAnchor="middle" fontSize="17" fontWeight="700" fill="#fff" fontFamily="Open Sans">P</text>
      </Cell>
      <div className="ml-[18px] mr-[18px] mt-[12px] h-[74px] w-[2px] shrink-0 bg-[#465064]" />
      {/* Stacked document */}
      <Cell>
        <rect x="12" y="17" width="60" height="50" rx="2" fill="#d8dadd" />
        <path d="M15 15h28c8 6 21 14 26 20v48H15z" fill="#fdfdfd" />
        <path d="M43 15c12 2 25 12 26 26-5-8-14-9-19-9 0-6-2-13-7-17z" fill="#e3e5e8" />
        <path d="M24 24h13" stroke="#333" strokeWidth="2" />
        <path d="M24 28h22M24 31h15" stroke="#7fa9e8" strokeWidth="1" />
        {[36, 41, 46, 51, 56, 61].map((y) => (
          <path key={y} d={`M24 ${y}h2M29 ${y + 1}h26`} stroke="#c3c8d1" strokeWidth="1" />
        ))}
        <text x="42" y="79" textAnchor="middle" fontSize="12.500" fill="#555" fontFamily="Inter" letterSpacing="-.5">DOCX</text>
      </Cell>
      <DockThumb y={22} h={47} badge={<MiniTile mark={<OfficeMark {...WORD} />} />}>
        <WordToolbar />
        <path d="M21 30v37M62 30v37" stroke="#34363a" />
        {[38, 42, 46, 50, 54, 58].map((y) => (
          <path key={y} d={`M28 ${y}h29`} stroke="#56636f" strokeWidth="1" strokeDasharray="5 1 3 1" />
        ))}
      </DockThumb>
      <DockThumb y={16} h={59} badge={<g transform="translate(48.500 52.500) scale(.38)"><Bubbles /></g>}>
        <path d="M4 16h31v59H4z" fill="#3f4042" />
        <path d="M5 24h29v5H5z" fill="#66686b" />
        <circle cx="9" cy="27" r="2.500" fill="#eee" />
        <path d="M52 23h26v11H52z" fill="#1f7ff2" />
        <path d="M37 37h13v35H37z" fill="#c9b193" />
        <path d="M38 44h11M38 51h11M38 58h11M38 65h11" stroke="#6b5744" strokeWidth="1.500" />
      </DockThumb>
      <DockThumb y={20} h={52} badge={<MiniTile mark={<OfficeMark {...OUTLOOK} />} />}>
        <path d="M4 20h75v9H4z" fill="#3a3b3e" />
        <path d="M6 22.500h70M6 26h60" stroke="#77797d" strokeWidth=".8" strokeDasharray="3 3" />
        <path d="M4 29h18v41H4z" fill="#38393c" />
        <path d="M6 33h13M6 37h11M6 41h13M6 45h9M6 49h12M6 53h13M6 57h9" stroke="#66686c" strokeWidth=".8" />
        <path d="M25 34h22M25 39h20M25 45h22M25 50h18M25 56h22M25 62h20" stroke="#4b6996" strokeWidth="1" />
        <path d="M49 29v43" stroke="#4a4b4e" />
        <circle cx="53" cy="34" r="2.500" fill="#ddd" />
        <path d="M58 32h16M58 35h12" stroke="#888" strokeWidth=".8" />
      </DockThumb>
      <DockThumb y={22} h={47} badge={<MiniTile mark={<OfficeMark {...WORD} />} />}>
        <WordToolbar />
        <path d="M21 30v37M62 30v37M21 38h41" stroke="#34363a" />
        <path d="M25 40h6v27h-6zM25 30h6v2h-6z" fill="#4d86ea" />
        <path d="M34 48h24M34 52h20M34 56h24M34 60h18" stroke="#5a5c60" strokeWidth=".8" />
      </DockThumb>
      <DockThumb
        y={22}
        h={48}
        badge={<g transform="translate(50 52.500) scale(.375)"><Gear /></g>}
      >
        <path d="M4 22h75v4H4z" fill="#3c3d40" />
        <circle cx="7" cy="24" r="1.200" fill="#f05b50" />
        <circle cx="19" cy="36.500" r="6.500" fill="#1b87f3" />
        <path d="M16 33.500l6 6-3 3v-12l3 3-6 6" fill="none" stroke="#fff" strokeWidth="1.200" />
        <path d="M13 47h13M13 50h13M13 53h13" stroke="#8a8c90" strokeWidth=".8" />
        <path d="M33 29h43v36H33z" fill="#1c1d1f" />
        <path d="M38 33h8M38 39h14M65 39h8" stroke="#999" strokeWidth=".8" />
        <circle cx="36" cy="39" r="1.500" fill="#1b87f3" />
      </DockThumb>
      {/* Trash */}
      <Cell>
        <path d="M14 18l8 57c1 4 9 6 20 6s19-2 20-6l8-57z" fill="url(#bin)" opacity=".92" />
        <ellipse cx="42" cy="18" rx="28" ry="5" fill="#3f4449" stroke="#aab0b4" strokeWidth="1.500" />
        <path d="M18 19l9-9 8 3 6-4 7 5 8-4 9 9-10 6-10-5-8 5-9-3z" fill="#e9ebec" />
        <path d="M30 12l5 8M47 11l-3 9M56 15l-6 6M24 15l4 5M60 14l-2 7" stroke="#4a4e53" strokeWidth="1.600" />
        <path d="M49 14l5 3-3 4z" fill="#d8673d" />
        <path d="M36 16l4 2-3 4z" fill="#3e7d63" />
        <path d="M28 30l4 42M54 28l-5 45" stroke="#b9bec2" strokeWidth="2" opacity=".35" />
      </Cell>
    </div>
  );
}

/* ------------------------------------------------------------------ */

export default function App() {
  return (
    <div className="flex h-[1600px] w-[2560px] flex-col overflow-hidden bg-[#03070f] font-['Inter',sans-serif]">
      <MenuBar />
      <div className="relative flex h-[1419px] shrink-0 flex-col overflow-hidden rounded-t-[10px] rounded-b-[14px] border-t-2 border-[#545454] bg-[#222]">
        <div className="flex shrink-0 flex-col border-x border-[#545454]">
          <TabBar />
          <Toolbar />
        </div>
        <div className="flex min-h-0 flex-1">
          <LayersPanel />
          <Canvas />
          <DesignPanel />
        </div>
        <div className="pointer-events-none absolute inset-x-0 bottom-0 h-[60px] bg-linear-to-b from-transparent to-black/4" />
        <div className="absolute bottom-[48px] right-[48px] flex size-[72px] items-center justify-center rounded-full bg-[#2c2c2c] text-white">
          <svg className="h-[30px] w-[18px]" viewBox="0 0 18 30" fill="none" stroke="#fff" strokeWidth="2">
            <path d="M1.500 8.500a7.500 7.500 0 1 1 12.500 5.500c-3 2.500-5 4-5 7.500" />
            <path d="M8 27.500h2.200" />
          </svg>
        </div>
      </div>
      <div className="flex h-[34px] shrink-0 flex-col bg-linear-to-b from-black to-[#040914]">
        <div className="ml-[53px] mt-px flex h-[3px] w-[2482px] overflow-hidden rounded-b-[3px] bg-[#6e6a6b]">
          <div className="w-[409px] bg-[#1b1b1b]" />
        </div>
      </div>
      <Dock />
    </div>
  );
}
